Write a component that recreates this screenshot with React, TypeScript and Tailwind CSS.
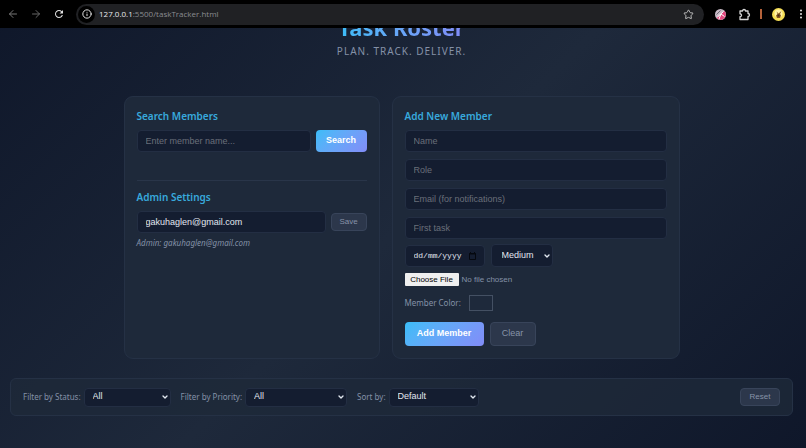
import { useState, type ReactNode } from "react";
import { ArrowLeft, ArrowRight, ChevronDown, Info, Star } from "lucide-react";
import { MdRefresh } from "react-icons/md";

const sans = "font-['Liberation_Sans',Arial,sans-serif]";
const field =
  "min-w-0 rounded-[4px] border border-[#232e43] bg-[#141d30] text-[#e2e8f0] outline-none placeholder:text-[#6a6f7a] " + sans;
const primary =
  "rounded-[4px] bg-linear-135 from-[#38bdf8] to-[#818cf8] font-bold text-white " + sans;
const secondary =
  "rounded-[4px] border border-[#38445a] bg-[#2c374b] text-[#8793a8] " + sans;

function BrowserBar() {
  return (
    <header className="relative z-10 flex h-7 items-center bg-black text-[#c7c7c7]">
      <nav className="flex w-[76px] shrink-0 items-center justify-between pr-[11px] pl-[7px]">
        <button aria-label="Back" className="text-[#777]"><ArrowLeft size={12} strokeWidth={2} /></button>
        <button aria-label="Forward" className="text-[#666]"><ArrowRight size={12} strokeWidth={2} /></button>
        <button aria-label="Reload" className="text-[#e3e3e3]"><MdRefresh size={12} /></button>
      </nav>
      <div className="flex h-[21px] min-w-0 flex-1 items-center rounded-full bg-[#202124] pr-[10px] pl-[2px]">
        <span className="flex size-[17px] items-center justify-center rounded-full bg-black text-[#e3e3e3]">
          <Info size={10} strokeWidth={2.4} />
        </span>
        <p className="flex-1 pl-[4px] font-['Open_Sans','Noto_Sans',sans-serif] text-[8px] leading-3 text-[#8b8d91]">
          <span className="text-[#e8eaed]">127.0.0.1</span>:5500/taskTracker.html
        </p>
        <button aria-label="Bookmark"><Star size={11} strokeWidth={2} /></button>
      </div>
      <div className="flex shrink-0 items-center pr-[2px] pl-[11px]">
        <svg width="11" height="11" viewBox="0 0 22 22" aria-hidden="true">
          <circle cx="11" cy="11" r="11" fill="#c9bcc8" />
          <path d="M3 18 19 4a11 11 0 0 1-4 17Q8 23 3 18Z" fill="#e2487f" />
          <path d="m5 16 12-11M8 20l4-10 7 5" stroke="#fff" strokeWidth="2" fill="none" />
          <path d="m3 11 8-8" stroke="#6d6672" strokeWidth="2" />
        </svg>
        <svg className="ml-[12px] text-[#d5d5d5]" width="13" height="13" viewBox="0 0 26 26" fill="none" stroke="currentColor" strokeWidth="2.6" strokeLinejoin="round" aria-hidden="true">
          <path d="M4 6h5a3 3 0 0 1 6 0h5v5a3 3 0 0 1 0 6v6H4v-5.500a3 3 0 0 0 0-6Z" />
        </svg>
        <span className="ml-[9px] h-[10px] w-[2px] bg-[#b5623a]" />
        <svg className="ml-[10px]" width="13" height="13" viewBox="0 0 26 26" aria-hidden="true">
          <circle cx="13" cy="13" r="13" fill="#f5de55" />
          <circle cx="13" cy="11" r="8" fill="#fff3a5" />
          <path d="m9 7 4 4 6-5-3 6 2 3-2 5h-6l-2-5 3-3Z" fill="#8c5a20" />
          <path d="M11 13h4v4h-4z" fill="#402c18" />
        </svg>
        <button aria-label="Menu" className="ml-[13px] text-[#e3e3e3]">
          <svg width="6" height="12" viewBox="0 0 6 12" fill="currentColor" aria-hidden="true">
            <circle cx="3" cy="2.500" r="1" />
            <circle cx="3" cy="6" r="1" />
            <circle cx="3" cy="9.500" r="1" />
          </svg>
        </button>
      </div>
    </header>
  );
}

function Select({ id, label, options, className }: { id: string; label?: string; options: string[]; className: string }) {
  return (
    <span className="relative inline-flex items-center">
      <select id={id} aria-label={label} className={"appearance-none text-[9px] " + field + " " + className}>
        {options.map((o) => <option key={o}>{o}</option>)}
      </select>
      <ChevronDown size={8} strokeWidth={4} className="pointer-events-none absolute right-[2px] text-[#e2e8f0]" />
    </span>
  );
}

function Card({ children }: { children: ReactNode }) {
  return <section className="rounded-[9px] border border-[#253145] bg-[#1e293a] px-3 pt-[11px] pb-3">{children}</section>;
}

function Heading({ children }: { children: ReactNode }) {
  return <h2 className="text-[10px] leading-4 font-semibold text-[#38a9dd]">{children}</h2>;
}

export default function App() {
  const [email, setEmail] = useState("gakuhaglen@gmail.com");
  const [color, setColor] = useState("#1e293b");
  return (
    <div className="flex min-h-screen flex-col bg-linear-135 from-[#0f172a] via-[#1e293b] to-[#0f172a] font-['Noto_Sans','Open_Sans',sans-serif] text-[#8491a7]">
      <BrowserBar />
      <main className="flex-1 pr-[13px] pl-[10px]">
        <div className="-mt-4 text-center">
          <h1 className="mx-auto w-fit bg-linear-90 from-[#38bdf8] to-[#818cf8] bg-clip-text text-[22px] leading-[30px] font-bold text-transparent">
            Task Roster
          </h1>
          <p className="mt-[1px] text-[10px] leading-4 tracking-[1px]">PLAN. TRACK. DELIVER.</p>
        </div>

        <div className="mx-auto mt-[37px] grid max-w-[556px] grid-cols-[8fr_9fr] gap-3">
          <Card>
            <Heading>Search Members</Heading>
            <form className="mt-[6px] flex gap-[5px]" onSubmit={(e) => e.preventDefault()}>
              <input aria-label="Search members" placeholder="Enter member name..." className={field + " h-[22px] flex-1 px-[8px] text-[9px]"} />
              <button className={primary + " h-[22px] w-[51px] text-[9px]"}>Search</button>
            </form>
            <hr className="mt-7 border-[#293549]" />
            <div className="mt-2">
              <Heading>Admin Settings</Heading>
            </div>
            <form className="mt-[6px] flex items-center gap-[5px]" onSubmit={(e) => e.preventDefault()}>
              <input aria-label="Admin email" type="email" value={email} onChange={(e) => setEmail(e.target.value)} className={field + " h-[22px] flex-1 px-[8px] text-[9px]"} />
              <button className={secondary + " h-[18px] w-9 text-[8px]"}>Save</button>
            </form>
            <p className="mt-[4px] text-[8px] leading-3 italic">Admin: gakuhaglen@gmail.com</p>
          </Card>

          <Card>
            <Heading>Add New Member</Heading>
            <form className="mt-[6px]" onSubmit={(e) => e.preventDefault()}>
              <div className="flex flex-col gap-[7px]">
                {["Name", "Role", "Email (for notifications)", "First task"].map((p) => (
                  <input key={p} aria-label={p} placeholder={p} className={field + " h-[22px] px-[8px] text-[9px]"} />
                ))}
              </div>
              <div className="mt-[5px] flex items-center gap-[6px]">
                <span className="relative flex items-center">
                  <input
                    aria-label="Due date"
                    placeholder="dd/mm/yyyy"
                    className="h-[22px] w-20 rounded-[4px] border border-[#232e43] bg-[#141d30] px-[8px] font-['Liberation_Mono',monospace] text-[8px] text-[#e2e8f0] outline-none placeholder:text-[#e2e8f0]"
                  />
                  <svg className="absolute right-[9px]" width="7" height="8" viewBox="0 0 7 8" aria-hidden="true">
                    <path d="M.5 1.500h6v6h-6zM0 2h7M1.500 0v2M5.500 0v2" fill="none" stroke="#05080f" />
                  </svg>
                </span>
                <Select id="priority" label="Priority" options={["Medium", "Low", "High"]} className="h-[23px] w-[62px] pl-[10px]" />
              </div>
              <input
                type="file"
                aria-label="Member photo"
                className={sans + " mt-[6px] block h-[14px] w-full text-[8px] leading-[12px] text-[#8491a7] file:mr-[3px] file:h-[13px] file:w-[54px] file:rounded-[1px] file:bg-[#efefef] file:p-0 file:text-center file:text-[8px] file:leading-[13px] file:text-black"}
              />
              <div className="mt-[8px] flex h-4 items-center gap-2 text-[8px]">
                <label htmlFor="color">Member Color:</label>
                <input
                  id="color"
                  type="color"
                  value={color}
                  onChange={(e) => setColor(e.target.value)}
                  className="h-4 w-6 appearance-none border border-[#445063] bg-transparent p-0 [&::-webkit-color-swatch]:border-0 [&::-webkit-color-swatch-wrapper]:p-0"
                />
              </div>
              <div className="mt-[11px] flex gap-[6px]">
                <button className={primary + " h-6 w-[79px] text-[9px]"}>Add Member</button>
                <button type="reset" className={secondary + " h-6 w-[46px] text-[9px]"}>Clear</button>
              </div>
            </form>
          </Card>
        </div>

        <div className="mt-[19px] flex h-[38px] items-center rounded-[6px] border border-[#253145] bg-[#1e293a]/80 px-3 text-[8px]">
          <label htmlFor="status" className="mr-[3px]">Filter by Status:</label>
          <Select id="status" options={["All", "Pending", "Done"]} className="h-[19px] w-[87px] px-[8px]" />
          <label htmlFor="filter" className="mr-[3px] ml-[10px]">Filter by Priority:</label>
          <Select id="filter" options={["All", "Low", "Medium", "High"]} className="h-[19px] w-[102px] px-[8px]" />
          <label htmlFor="sort" className="mr-[3px] ml-[10px]">Sort by:</label>
          <Select id="sort" options={["Default", "Name"]} className="h-[19px] w-[90px] px-[8px]" />
          <button className={secondary + " ml-auto h-[18px] w-10 text-[8px]"}>Reset</button>
        </div>
      </main>
    </div>
  );
}
